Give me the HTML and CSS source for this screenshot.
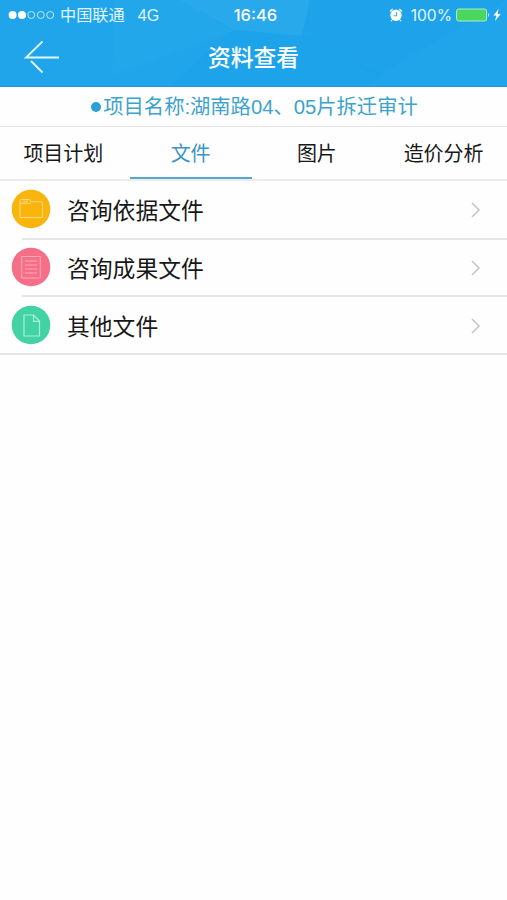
FILE: index.html
```html
<!DOCTYPE html>
<html lang="zh-CN">
<head>
<meta charset="utf-8">
<title>资料查看</title>
<link rel="stylesheet" href="styles.css">
</head>
<body>
<header class="header">
  <svg class="facets" viewBox="0 0 507 87" preserveAspectRatio="none" aria-hidden="true">
    <path d="M115 0H185L232 32L112 76Z" fill="#3bb4ee" opacity=".16"/>
    <path d="M180 0H310L302 37L234 30Z" fill="#38b3ef" opacity=".3"/>
    <path d="M302 36L337 55L385 77L365 87H170L234 30Z" fill="#0d91df" opacity=".1"/>
    <path d="M310 0H507L425 48L378 76L302 37Z" fill="#168fe2" opacity=".1"/>
  </svg>
  <div class="status">
    <div class="carrier">
      <svg width="47" height="12" viewBox="0 0 47 12"><g fill="#fff"><circle cx="4.6" cy="6" r="4"/><circle cx="14" cy="6" r="4"/></g><g fill="none" stroke="#bfe9fc" stroke-width="1"><circle cx="23.3" cy="6" r="3.5"/><circle cx="32.8" cy="6" r="3.5"/><circle cx="42.2" cy="6" r="3.5"/></g></svg>
      <span class="operator">中国联通</span><span class="network">4G</span>
    </div>
    <time class="time">16:46</time>
    <div class="power">
      <svg class="alarm" width="14" height="14" viewBox="0 0 14 14"><circle cx="7" cy="7.3" r="5.7" fill="#fff"/><path d="M1 3.5L3.7 1M13 3.5L10.3 1M3 12L2 13M11 12L12 13" stroke="#e1f5ff" stroke-width="1.6"/><path d="M7.5 4V7.8H4.5" fill="none" stroke="#42aee8" stroke-width="1.1"/></svg>
      <span class="percent">100%</span>
      <svg width="34" height="14" viewBox="0 0 34 14"><rect x=".6" y="1" width="30" height="12" rx="2" fill="#4bd65f" stroke="#a7edd6"/><path d="M32 5Q34 7 32 9Z" fill="#d5f4ff"/></svg>
      <svg class="bolt" width="8" height="12" viewBox="0 0 8 12"><path d="M5.6 0L.5 6.5H3.4L2 12L7.7 5H4.6Z" fill="#fff"/></svg>
    </div>
  </div>
  <div class="navbar">
    <svg class="back" width="36" height="34" viewBox="0 0 36 34"><path d="M18.5 1.5L2 17.5H35M7 21L18.5 32.5" fill="none" stroke="#e4f8ff" stroke-width="1.8"/></svg>
    <h1>资料查看</h1>
  </div>
</header>
<div class="project"><i class="dot"></i><span>项目名称:湖南路04、05片拆迁审计</span></div>
<nav class="tabs">
  <a class="tab">项目计划</a><a class="tab active">文件</a><a class="tab">图片</a><a class="tab">造价分析</a>
</nav>
<main class="list">
  <div class="row">
    <svg class="icon" viewBox="0 0 40 40"><circle cx="20" cy="20" r="19.3" fill="#f9b40d"/><path d="M9 28.5V12Q9 10.5 10.5 10.5H18Q19.5 10.5 20 12.7H30Q31.5 12.7 31.5 14V28.5ZM9 14.3H20M12 12.3H17" fill="none" stroke="#ffdc7c"/></svg>
    <span class="label">咨询依据文件</span>
    <svg class="chevron" viewBox="0 0 10 16"><path d="M1 1L8 8L1 15" fill="none" stroke="#c6c6c6" stroke-width="1.6"/></svg>
  </div>
  <div class="row">
    <svg class="icon" viewBox="0 0 40 40"><circle cx="20" cy="20" r="19.3" fill="#f56f89"/><path d="M10.7 9.5H29.3V31H10.7ZM14 14H26M14 18H26M14 22H26M14 26H26" fill="none" stroke="#ffa8b8"/></svg>
    <span class="label">咨询成果文件</span>
    <svg class="chevron" viewBox="0 0 10 16"><path d="M1 1L8 8L1 15" fill="none" stroke="#c6c6c6" stroke-width="1.6"/></svg>
  </div>
  <div class="row">
    <svg class="icon" viewBox="0 0 40 40"><circle cx="20" cy="20" r="19.3" fill="#42d2a4"/><path d="M13 10H22.8L28.5 16V31H13ZM22.5 10V16.3H28.5" fill="none" stroke="#a4f3d8" stroke-width="1.2"/></svg>
    <span class="label">其他文件</span>
    <svg class="chevron" viewBox="0 0 10 16"><path d="M1 1L8 8L1 15" fill="none" stroke="#c6c6c6" stroke-width="1.6"/></svg>
  </div>
</main>
</body>
</html>
```
FILE: styles.css
```css
* { box-sizing: border-box; }
body {
  margin: 0;
  min-height: 900px;
  background: #fefefe;
  color: #181818;
  font-family: "Liberation Sans", "Noto Sans CJK SC", sans-serif;
}
svg { display: block; flex: none; }
.header {
  position: relative;
  height: 87px;
  overflow: hidden;
  background: #20a5eb;
  border-bottom: 1px solid #2398d5;
  color: #fff;
}
.facets { position: absolute; inset: 0; width: 100%; height: 100%; }
.status {
  position: relative;
  display: grid;
  grid-template-columns: 1fr auto 1fr;
  align-items: center;
  height: 29px;
  padding: 0 6px 0 8px;
  line-height: 29px;
}
.carrier, .power { display: flex; align-items: center; color: #e2f6ff; }
.operator { margin-left: 5px; padding-top: 1px; font-size: 16.2px; }
.network { margin-left: 13px; padding-top: 1px; font-size: 16px; }
.time { padding: 1px 0 0 2px; font-family: Inter, sans-serif; font-size: 16.5px; font-weight: 500; }
.power { justify-content: flex-end; }
.percent { margin: 0 4px 0 8px; padding-top: 1px; font-family: Inter, sans-serif; font-size: 15.6px; }
.bolt { margin-left: 3px; }
.navbar {
  position: relative;
  display: grid;
  grid-template-columns: 60px 1fr 60px;
  align-items: center;
  height: 57px;
}
.back { margin: -2px 0 0 24px; }
h1 {
  margin: 0;
  text-align: center;
  font-size: 22.8px;
  font-weight: 500;
  line-height: 36px;
}
.project {
  display: flex;
  justify-content: center;
  align-items: center;
  height: 40px;
  padding: 1px 0 0 2px;
  border-bottom: 1px solid #e6e6e6;
  color: #3da3cb;
  font-size: 20.3px;
  line-height: 38px;
  white-space: nowrap;
}
.dot { width: 10px; height: 10px; margin-right: 2px; border-radius: 50%; background: #2aa0d5; }
.tabs {
  display: grid;
  grid-template-columns: repeat(4, 1fr);
  height: 54px;
  border-bottom: 2px solid #ececec;
}
.tab {
  height: 52px;
  padding-top: 2px;
  text-align: center;
  font-size: 20px;
  line-height: 50px;
}
.active {
  margin: 0 2px 0 3px;
  border-bottom: 2px solid #57a9cb;
  color: #3b94c1;
}
.row {
  display: flex;
  align-items: center;
  height: 58px;
  padding: 0 26px 2px 11px;
  background: linear-gradient(#e6e6e6, #e6e6e6) 22px 100% / 100% 2px no-repeat;
  font-size: 22.8px;
  line-height: 50px;
}
.row:first-child { height: 59px; padding-bottom: 3px; }
.row:nth-child(2) { height: 57px; padding-bottom: 3px; }
.row:last-child { background-position: 0 100%; }
.icon { width: 40px; height: 40px; margin-right: 16px; }
.label { padding-top: 4px; }
.chevron { width: 10px; height: 16px; margin: 2px 0 0 auto; }
```
